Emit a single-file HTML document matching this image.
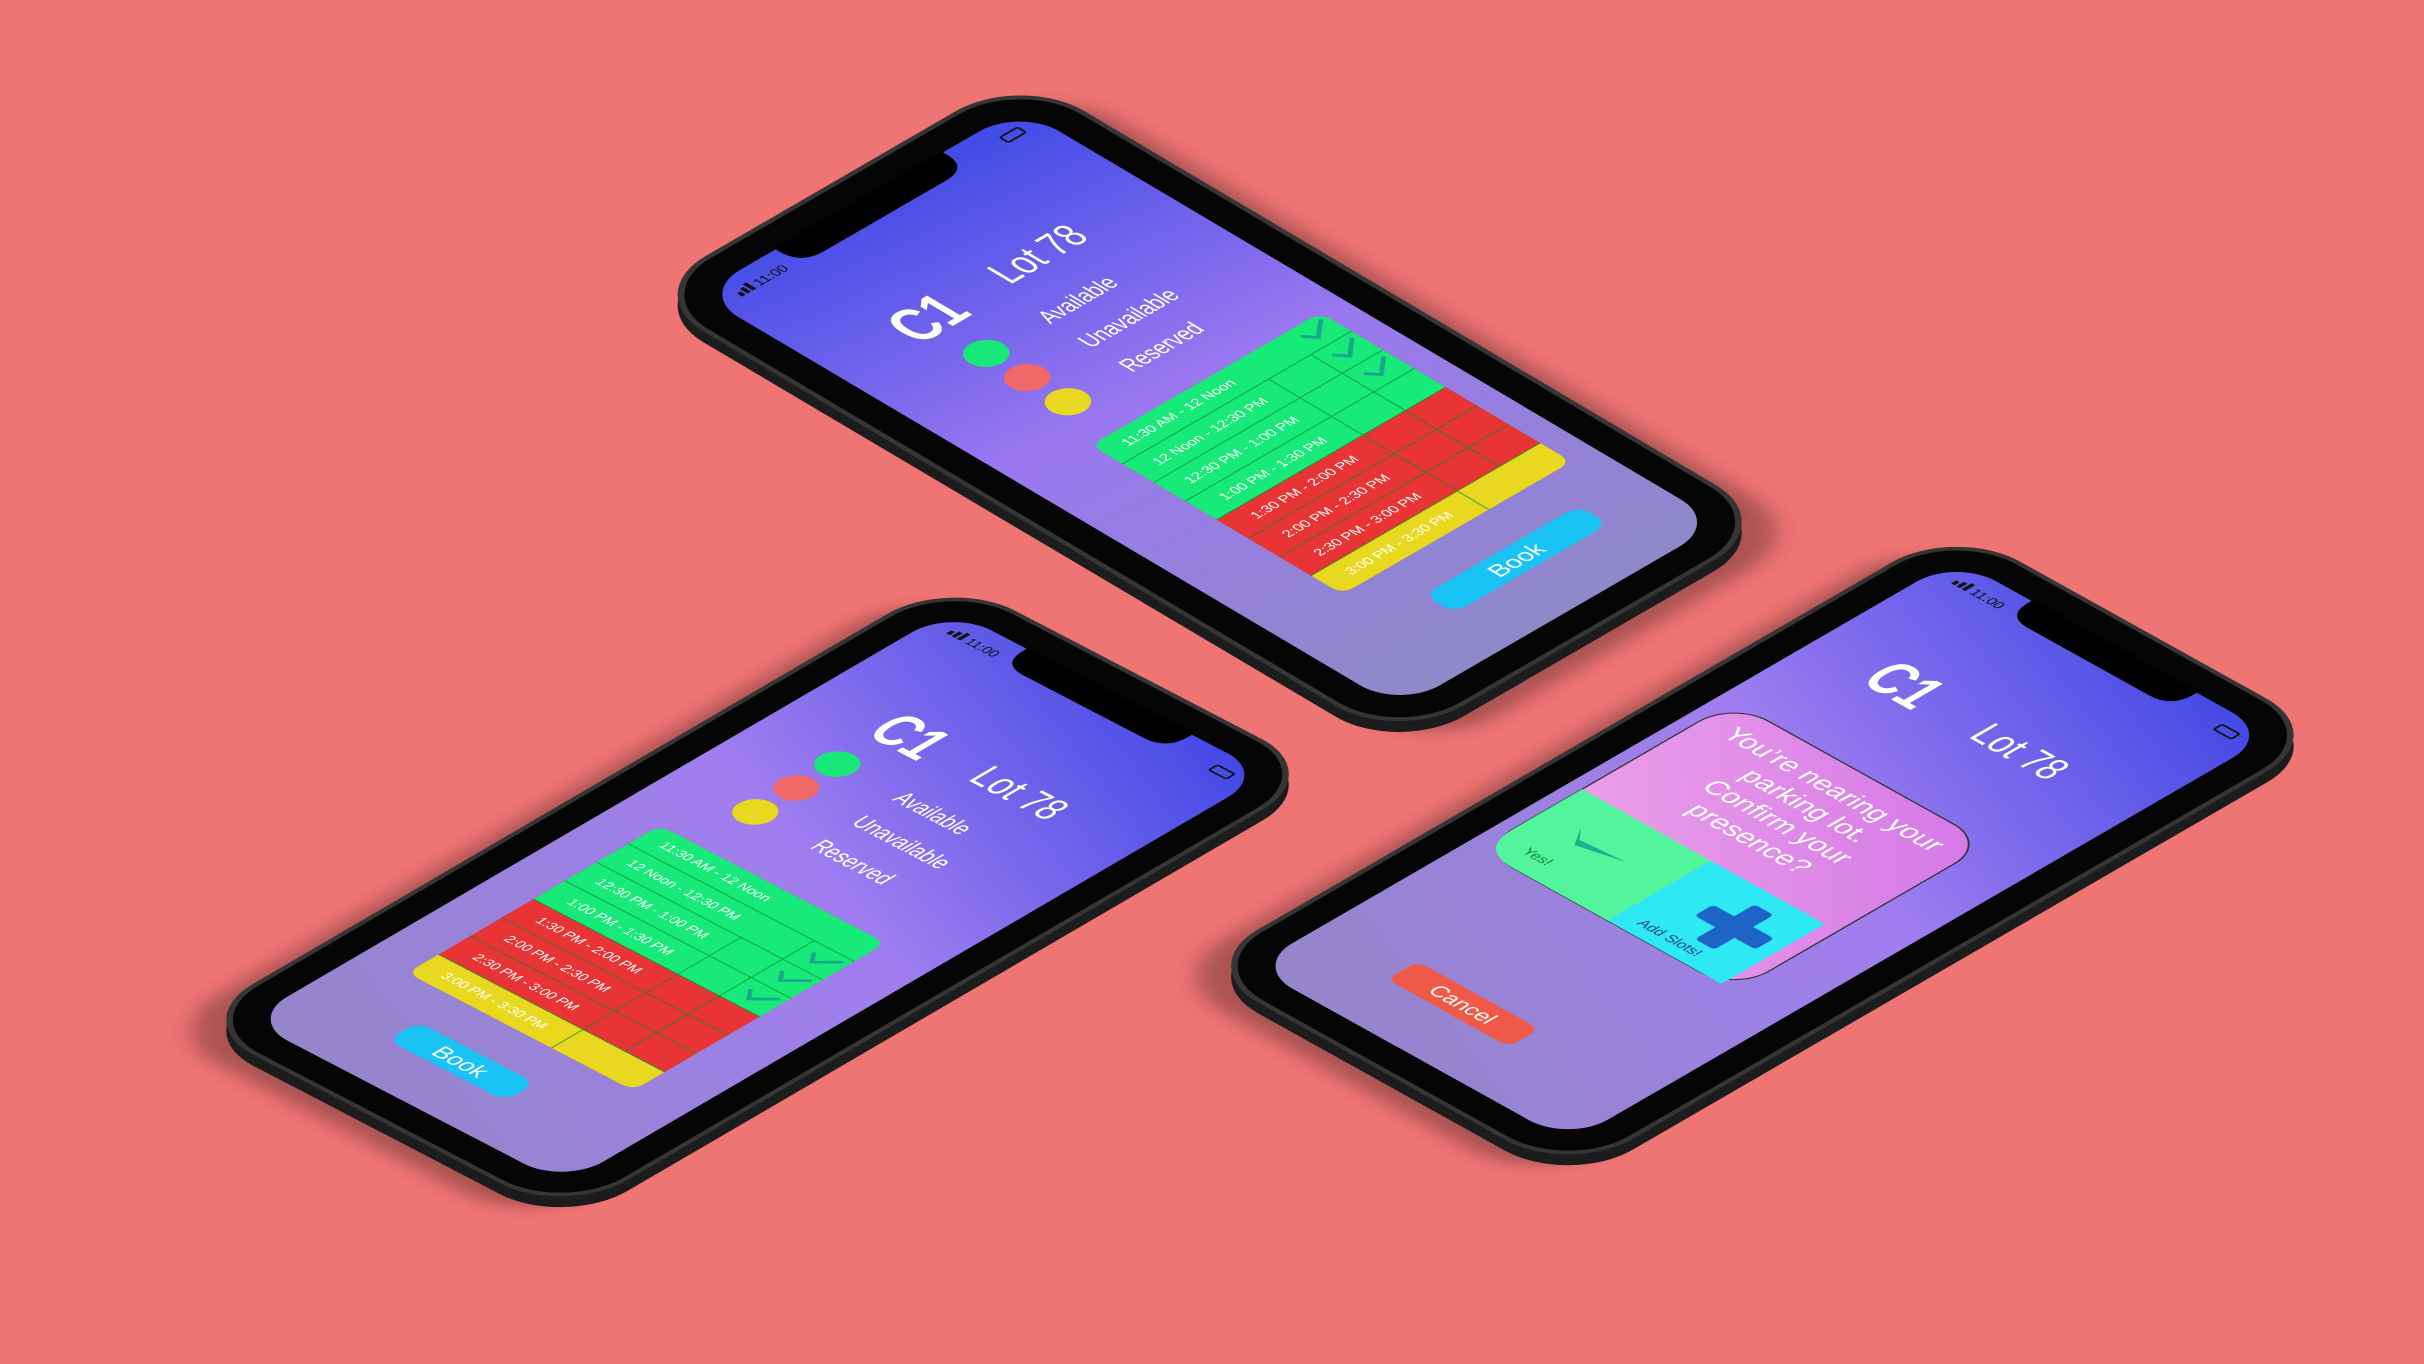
<!DOCTYPE html>
<html><head><meta charset="utf-8"><style>
html,body{margin:0;padding:0;background:#ef7574;}
svg{display:block}
.h{font-family:"Liberation Sans",sans-serif;fill:#fff}
.t{font-family:"Liberation Sans",sans-serif;fill:#fff}
</style></head><body>
<svg width="2424" height="1364" viewBox="0 0 1568 882" preserveAspectRatio="none" xmlns="http://www.w3.org/2000/svg">
<defs>
<linearGradient id="g1" gradientUnits="userSpaceOnUse" x1="250" y1="0" x2="150" y2="860">
<stop offset="0" stop-color="#3f4ae6"/><stop offset="0.45" stop-color="#9a78f0"/><stop offset="1" stop-color="#8e8ac6"/></linearGradient>
<linearGradient id="g2" gradientUnits="userSpaceOnUse" x1="400" y1="0" x2="50" y2="860">
<stop offset="0" stop-color="#3a44e4"/><stop offset="0.45" stop-color="#a07ef0"/><stop offset="1" stop-color="#9486c8"/></linearGradient>
<linearGradient id="pk" x1="1" y1="0" x2="0" y2="1"><stop offset="0" stop-color="#d478e8"/><stop offset="1" stop-color="#f0a8e8"/></linearGradient>
<filter id="bl" x="-20%" y="-20%" width="140%" height="140%"><feGaussianBlur stdDeviation="10"/></filter>
</defs>
<rect width="1568" height="882" fill="#ef7574"/>

<!-- PHONE 1 -->
<g transform="matrix(0.57,-0.33,0.55,0.3256,432,190)">
<rect x="-6" y="14" width="432" height="892" rx="74" fill="#5a2a2a" opacity="0.45" filter="url(#bl)"/>
</g>
<g transform="translate(0,7) matrix(0.57,-0.33,0.55,0.3256,432,190)">
<rect x="-16" y="-16" width="432" height="892" rx="74" fill="#1c1c1c"/>
</g>
<g transform="matrix(0.57,-0.33,0.55,0.3256,432,190)">
<rect x="-16" y="-16" width="432" height="892" rx="74" fill="#353535"/>
<rect x="-11" y="-11" width="422" height="882" rx="70" fill="#050505"/>
<rect x="18" y="18" width="364" height="824" rx="46" fill="url(#g1)"/>
<path d="M105,16 h190 v6 q0,26 -26,26 h-138 q-26,0 -26,-26 z" fill="#000"/>
<g fill="#111"><rect x="40" y="40" width="4" height="6"/><rect x="46" y="37" width="4" height="9"/><rect x="52" y="34" width="4" height="12"/></g>
<text x="60" y="46" font-size="14" class="t" style="fill:#111">11:00</text>
<rect x="342" y="36" width="20" height="10" rx="2" fill="none" stroke="#111" stroke-width="2"/>
<g transform="translate(95,198) scale(0.72,1)"><text x="0" y="0" font-size="66" class="h" font-weight="bold">C1</text></g>
<g transform="translate(205,190) scale(0.75,1)"><text x="0" y="0" font-size="44" class="h">Lot 78</text></g>
<circle cx="125" cy="245" r="19" fill="#18e87a"/><circle cx="125" cy="293" r="19" fill="#f06868"/><circle cx="125" cy="341" r="19" fill="#e8d820"/>
<g transform="translate(190,253) scale(0.75,1)"><text x="0" y="0" font-size="26" class="h">Available</text></g>
<g transform="translate(190,301) scale(0.75,1)"><text x="0" y="0" font-size="26" class="h">Unavailable</text></g>
<g transform="translate(190,349) scale(0.75,1)"><text x="0" y="0" font-size="26" class="h">Reserved</text></g>
<g>
<rect x="96" y="398" width="260" height="296" rx="14" fill="#e83434"/>
<path d="M96,412 q0,-14 14,-14 h232 q14,0 14,14 v134 h-260 z" fill="#17ea78"/>
<path d="M96,657 h260 v23 q0,14 -14,14 h-232 q-14,0 -14,-14 z" fill="#e8d820"/>
<g stroke="#0a8a2a" stroke-width="1.2" opacity="0.7">
<line x1="96" y1="435" x2="356" y2="435"/><line x1="96" y1="472" x2="356" y2="472"/><line x1="96" y1="509" x2="356" y2="509"/>
<line x1="96" y1="546" x2="356" y2="546"/><line x1="96" y1="583" x2="356" y2="583"/><line x1="96" y1="620" x2="356" y2="620"/><line x1="96" y1="657" x2="356" y2="657"/>
<line x1="262" y1="435" x2="262" y2="694"/><line x1="310" y1="435" x2="310" y2="657"/>
</g>
<g font-size="14" text-anchor="middle" class="t">
<text x="178" y="421">11:30 AM - 12 Noon</text><text x="178" y="458">12 Noon - 12:30 PM</text><text x="178" y="495">12:30 PM - 1:00 PM</text><text x="178" y="532">1:00 PM - 1:30 PM</text>
<text x="178" y="569">1:30 PM - 2:00 PM</text><text x="178" y="606">2:00 PM - 2:30 PM</text><text x="178" y="643">2:30 PM - 3:00 PM</text><text x="178" y="680">3:00 PM - 3:30 PM</text>
</g>
<g fill="none" stroke="#1aa88a" stroke-width="4" stroke-linecap="round">
<path d="M323,412 l8,10 l18,-16"/><path d="M323,449 l8,10 l18,-16"/><path d="M323,486 l8,10 l18,-16"/>
</g>
</g>
<rect x="142" y="742" width="175" height="36" rx="14" fill="#19c4f4"/>
<text x="229" y="769" font-size="24" text-anchor="middle" class="t">Book</text>
</g>

<!-- PHONE 2 -->
<g transform="matrix(0.5625,0.2925,-0.5523,0.3221,615,383)">
<rect x="-26" y="14" width="432" height="892" rx="74" fill="#5a2a2a" opacity="0.45" filter="url(#bl)"/>
</g>
<g transform="translate(0,7) matrix(0.5625,0.2925,-0.5523,0.3221,615,383)">
<rect x="-16" y="-16" width="432" height="892" rx="74" fill="#1c1c1c"/>
</g>
<g transform="matrix(0.5625,0.2925,-0.5523,0.3221,615,383)">
<rect x="-16" y="-16" width="432" height="892" rx="74" fill="#353535"/>
<rect x="-11" y="-11" width="422" height="882" rx="70" fill="#050505"/>
<rect x="18" y="18" width="364" height="824" rx="46" fill="url(#g2)"/>
<path d="M105,16 h190 v6 q0,26 -26,26 h-138 q-26,0 -26,-26 z" fill="#000"/>
<g fill="#111"><rect x="40" y="40" width="4" height="6"/><rect x="46" y="37" width="4" height="9"/><rect x="52" y="34" width="4" height="12"/></g>
<text x="60" y="46" font-size="14" class="t" style="fill:#111">11:00</text>
<rect x="342" y="36" width="20" height="10" rx="2" fill="none" stroke="#111" stroke-width="2"/>
<g transform="translate(95,198) scale(0.72,1)"><text x="0" y="0" font-size="66" class="h" font-weight="bold">C1</text></g>
<g transform="translate(205,190) scale(0.75,1)"><text x="0" y="0" font-size="44" class="h">Lot 78</text></g>
<circle cx="110" cy="245" r="19" fill="#18e87a"/><circle cx="110" cy="293" r="19" fill="#f06868"/><circle cx="110" cy="341" r="19" fill="#e8d820"/>
<g transform="translate(180,253) scale(0.75,1)"><text x="0" y="0" font-size="26" class="h">Available</text></g>
<g transform="translate(180,301) scale(0.75,1)"><text x="0" y="0" font-size="26" class="h">Unavailable</text></g>
<g transform="translate(180,349) scale(0.75,1)"><text x="0" y="0" font-size="26" class="h">Reserved</text></g>
<g transform="translate(-30,10)">
<rect x="96" y="398" width="260" height="296" rx="14" fill="#e83434"/>
<path d="M96,412 q0,-14 14,-14 h232 q14,0 14,14 v134 h-260 z" fill="#17ea78"/>
<path d="M96,657 h260 v23 q0,14 -14,14 h-232 q-14,0 -14,-14 z" fill="#e8d820"/>
<g stroke="#0a8a2a" stroke-width="1.2" opacity="0.7">
<line x1="96" y1="435" x2="356" y2="435"/><line x1="96" y1="472" x2="356" y2="472"/><line x1="96" y1="509" x2="356" y2="509"/>
<line x1="96" y1="546" x2="356" y2="546"/><line x1="96" y1="583" x2="356" y2="583"/><line x1="96" y1="620" x2="356" y2="620"/><line x1="96" y1="657" x2="356" y2="657"/>
<line x1="262" y1="472" x2="262" y2="694"/><line x1="310" y1="435" x2="310" y2="657"/>
</g>
<g font-size="14" text-anchor="middle" class="t">
<text x="178" y="421">11:30 AM - 12 Noon</text><text x="178" y="458">12 Noon - 12:30 PM</text><text x="178" y="495">12:30 PM - 1:00 PM</text><text x="178" y="532">1:00 PM - 1:30 PM</text>
<text x="178" y="569">1:30 PM - 2:00 PM</text><text x="178" y="606">2:00 PM - 2:30 PM</text><text x="178" y="643">2:30 PM - 3:00 PM</text><text x="178" y="680">3:00 PM - 3:30 PM</text>
</g>
<g fill="none" stroke="#1aa88a" stroke-width="4" stroke-linecap="round">
<path d="M323,449 l8,10 l18,-16"/><path d="M323,486 l8,10 l18,-16"/><path d="M323,523 l8,10 l18,-16"/>
</g>
</g>
<rect x="124" y="750" width="135" height="36" rx="14" fill="#19c4f4"/>
<text x="191" y="777" font-size="24" text-anchor="middle" class="t">Book</text>
</g>

<!-- PHONE 3 -->
<g transform="matrix(0.5625,0.3125,-0.5523,0.3198,1265,350)">
<rect x="-26" y="14" width="432" height="892" rx="74" fill="#5a2a2a" opacity="0.45" filter="url(#bl)"/>
</g>
<g transform="translate(0,7) matrix(0.5625,0.3125,-0.5523,0.3198,1265,350)">
<rect x="-16" y="-16" width="432" height="892" rx="74" fill="#1c1c1c"/>
</g>
<g transform="matrix(0.5625,0.3125,-0.5523,0.3198,1265,350)">
<rect x="-16" y="-16" width="432" height="892" rx="74" fill="#353535"/>
<rect x="-11" y="-11" width="422" height="882" rx="70" fill="#050505"/>
<rect x="18" y="18" width="364" height="824" rx="46" fill="url(#g2)"/>
<path d="M105,16 h190 v6 q0,26 -26,26 h-138 q-26,0 -26,-26 z" fill="#000"/>
<g fill="#111"><rect x="40" y="40" width="4" height="6"/><rect x="46" y="37" width="4" height="9"/><rect x="52" y="34" width="4" height="12"/></g>
<text x="60" y="46" font-size="14" class="t" style="fill:#111">11:00</text>
<rect x="342" y="36" width="20" height="10" rx="2" fill="none" stroke="#111" stroke-width="2"/>
<g transform="translate(85,200) scale(0.72,1)"><text x="0" y="0" font-size="66" class="h" font-weight="bold">C1</text></g>
<g transform="translate(205,195) scale(0.75,1)"><text x="0" y="0" font-size="44" class="h">Lot 78</text></g>
<rect x="32" y="293" width="294" height="298" rx="40" fill="url(#pk)" stroke="#333" stroke-width="1.5"/>
<path d="M32,470 h148 v121 h-108 q-40,0 -40,-40 z" fill="#52f59c"/>
<path d="M180,470 h131 v121 h-131 z" fill="#2ee8f4"/>
<text font-size="28" text-anchor="middle" class="t">
<tspan x="180" y="335">You’re nearing your</tspan><tspan x="180" y="368">parking lot.</tspan><tspan x="180" y="401">Confirm your</tspan><tspan x="180" y="434">presence?</tspan></text>
<path d="M70,510 l12,14 l50,-4 l-48,12 z" fill="#1fb092"/>
<text x="60" y="570" font-size="15" class="t" style="fill:#118833">Yes!</text>
<g fill="#1e64c8"><rect x="250" y="490" width="22" height="70" rx="4"/><rect x="226" y="514" width="70" height="22" rx="4"/></g>
<text x="200" y="578" font-size="15" class="t" style="fill:#224488">Add Slots!</text>
<rect x="110" y="742" width="140" height="36" rx="10" fill="#ef5a48"/>
<text x="180" y="768" font-size="22" text-anchor="middle" class="t">Cancel</text>
</g>
</svg>
</body></html>
